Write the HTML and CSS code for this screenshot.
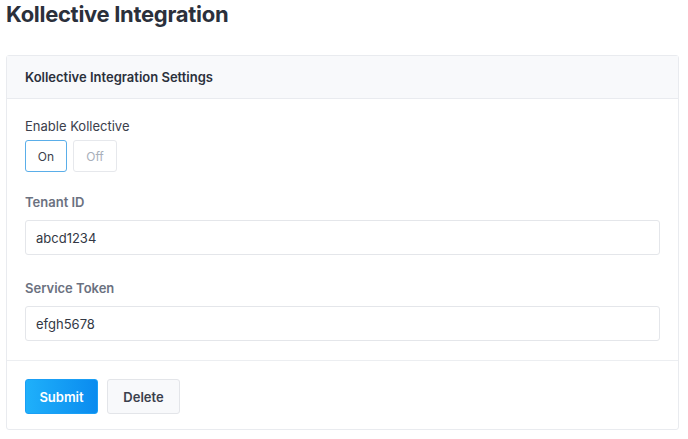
FILE: index.html
```html
<!DOCTYPE html>
<html>
<head>
<meta charset="utf-8">
<link rel="stylesheet" href="styles.css">
</head>
<body>
<h1 class="page-title">Kollective Integration</h1>
<div class="card">
  <div class="card-header">Kollective Integration Settings</div>
  <div class="card-body">
    <div class="field field-toggle">
      <div class="label-plain">Enable Kollective</div>
      <div class="toggle-group">
        <button class="toggle active">On</button>
        <button class="toggle toggle-wide">Off</button>
      </div>
    </div>
    <div class="field">
      <label class="label">Tenant ID</label>
      <input class="input" type="text" value="abcd1234">
    </div>
    <div class="field">
      <label class="label">Service Token</label>
      <input class="input" type="text" value="efgh5678">
    </div>
  </div>
  <div class="card-footer">
    <button class="btn btn-primary">Submit</button>
    <button class="btn btn-default">Delete</button>
  </div>
</div>
</body>
</html>
```
FILE: styles.css
```css
* { box-sizing: border-box; }
html, body { margin: 0; padding: 0; background: #fff; }
body {
  font-family: Inter, "Open Sans", sans-serif;
  color: #333844;
  padding: 0 9px 0 6px;
}
.page-title {
  margin: 0;
  padding-top: 1px;
  font-size: 22px;
  line-height: 26px;
  font-weight: 700;
  color: #2b303b;
  letter-spacing: -0.3px;
}
.card {
  margin-top: 28px;
  border: 1px solid #e9ebef;
  border-radius: 3px;
  background: #fff;
}
.card-header {
  height: 43px;
  background: #f8f9fb;
  border-bottom: 1px solid #e9ebef;
  padding: 0 18px;
  display: flex;
  align-items: center;
  font-size: 13px;
  font-weight: 600;
  color: #2b303b;
}
.card-body {
  padding: 19px 18px 19px;
  border-bottom: 1px solid #eceef1;
}
.field { margin-bottom: 25px; }
.field-toggle { margin-bottom: 22px; }
.field:last-child { margin-bottom: 0; }
.label-plain {
  font-size: 13px;
  line-height: 16px;
  color: #3b404c;
  margin-bottom: 6px;
}
.label {
  display: block;
  font-size: 13px;
  line-height: 16px;
  font-weight: 600;
  color: #6b7180;
  margin-bottom: 10px;
}
.toggle-group { display: flex; gap: 6px; }
.toggle {
  width: 42px;
  height: 32px;
  border: 1px solid #e6e8ec;
  border-radius: 3px;
  background: #fff;
  font-family: inherit;
  font-size: 12px;
  color: #a9afba;
  padding: 0;
}
.toggle-wide { width: 44px; }
.toggle.active {
  border-color: #5aaee9;
  color: #3b404c;
}
.input {
  display: block;
  width: 100%;
  height: 35px;
  border: 1px solid #e4e6ea;
  border-radius: 3px;
  padding: 0 10px;
  font-family: inherit;
  font-size: 13px;
  color: #333844;
  background: #fff;
  outline: none;
}
.card-footer {
  padding: 18px 18px 15px;
  display: flex;
  gap: 9px;
}
.btn {
  height: 35px;
  width: 73px;
  border-radius: 3px;
  font-family: inherit;
  font-size: 13px;
  font-weight: 600;
  padding: 0;
}
.btn-primary {
  background: linear-gradient(90deg, #1fb0fa, #0a8bef);
  border: 1px solid #1a9ff5;
  color: #fff;
}
.btn-default {
  background: #f8f9fb;
  border: 1px solid #e3e5e9;
  color: #3b404c;
}
```
